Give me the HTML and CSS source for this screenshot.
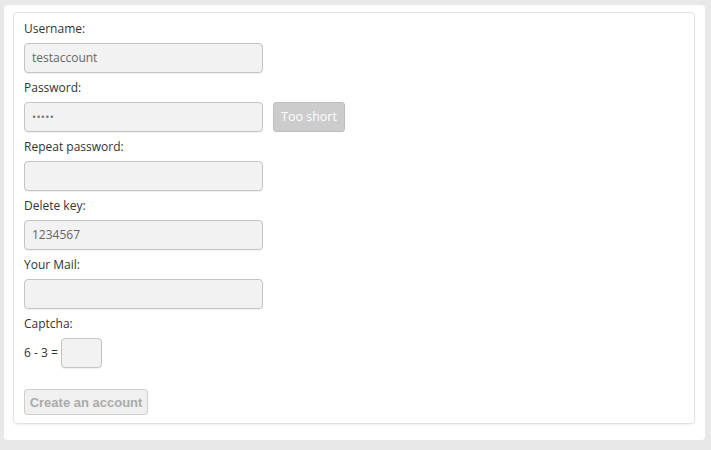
FILE: index.html
```html
<!DOCTYPE html>
<html>
<head>
<meta charset="utf-8">
<link rel="stylesheet" href="styles.css">
</head>
<body>
<div class="outer">
  <form class="panel">
    <div class="group">
      <label class="label">Username:</label>
      <div class="field">testaccount</div>
    </div>
    <div class="group">
      <label class="label">Password:</label>
      <div class="row">
        <div class="field dots">•••••</div>
        <span class="hint">Too short</span>
      </div>
    </div>
    <div class="group">
      <label class="label">Repeat password:</label>
      <div class="field"></div>
    </div>
    <div class="group">
      <label class="label">Delete key:</label>
      <div class="field">1234567</div>
    </div>
    <div class="group">
      <label class="label">Your Mail:</label>
      <div class="field"></div>
    </div>
    <div class="group">
      <label class="label">Captcha:</label>
      <div class="captcha">
        <span class="sum">6 - 3 =</span>
        <div class="field small"></div>
      </div>
    </div>
    <button type="button" class="submit">Create an account</button>
  </form>
</div>
</body>
</html>
```
FILE: styles.css
```css
html, body {
  margin: 0;
  padding: 0;
}
body {
  background: #e8e8e8;
  padding: 5px 6px 10px 4px;
  font-family: "Open Sans", "DejaVu Sans", sans-serif;
  font-size: 12px;
  color: #333;
}
.outer {
  background: #fff;
  border-radius: 4px;
  padding: 7px 10px 16px 9px;
  box-sizing: border-box;
  height: 435px;
}
.panel {
  border: 1px solid #e2e2e2;
  border-radius: 4px;
  padding: 6px 10px 7px 10px;
  margin: 0;
  box-sizing: border-box;
  height: 412px;
  box-shadow: 0 1px 2px rgba(0,0,0,0.06);
}
.group {
  margin-bottom: 5px;
}
.label {
  display: block;
  line-height: 20px;
  height: 20px;
  margin-bottom: 4px;
}
.row {
  display: flex;
  align-items: center;
  gap: 10px;
}
.field {
  width: 239px;
  height: 30px;
  box-sizing: border-box;
  border: 1px solid #c4c4c4;
  border-radius: 4px;
  background: #f2f2f2;
  color: #666;
  padding: 0 7px;
  line-height: 28px;
  box-shadow: 0 1px 1px rgba(0,0,0,0.06);
}
.dots {
  font-size: 11px;
  letter-spacing: 0.3px;
  color: #777;
}
.hint {
  display: inline-block;
  width: 72px;
  height: 30px;
  box-sizing: border-box;
  background: #cccccc;
  border: 1px solid #bdbdbd;
  border-radius: 3px;
  color: #fff;
  text-align: center;
  line-height: 28px;
  font-size: 12.5px;
}
.captcha {
  display: flex;
  align-items: center;
  gap: 3px;
  margin-bottom: 21px;
}
.sum {
  line-height: 30px;
}
.field.small {
  width: 41px;
}
.submit {
  display: block;
  width: 124px;
  height: 26px;
  box-sizing: border-box;
  margin: 0;
  padding: 0;
  background: #f0f0f0;
  border: 1px solid #cfcfcf;
  border-radius: 3px;
  color: #ababab;
  font-family: "Liberation Sans", Arial, sans-serif;
  font-weight: bold;
  font-size: 13px;
}
```
